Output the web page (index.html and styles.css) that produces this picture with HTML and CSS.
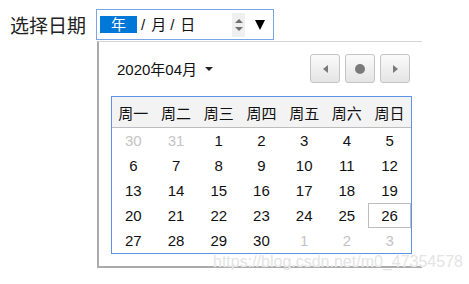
FILE: index.html
```html
<!DOCTYPE html>
<html lang="zh-CN">
<head>
    <meta charset="UTF-8">
    <title>选择日期</title>
    <link rel="stylesheet" href="styles.css">
</head>
<body>
<div class="top-row">
    <label class="label">选择日期</label>
    <div class="date-input">
        <span class="seg seg-active">年</span>
        <span class="sep">/</span>
        <span class="seg">月</span>
        <span class="sep">/</span>
        <span class="seg">日</span>
        <span class="spinner">
            <span class="spin-up"></span>
            <span class="spin-down"></span>
        </span>
        <span class="drop-arrow"></span>
    </div>
</div>

<div class="popup">
    <div class="cal-head">
        <div class="month">2020年04月<span class="caret"></span></div>
        <div class="nav">
            <button class="nav-btn"><span class="tri-left"></span></button>
            <button class="nav-btn"><span class="dot"></span></button>
            <button class="nav-btn"><span class="tri-right"></span></button>
        </div>
    </div>
    <table class="cal">
        <thead>
            <tr><th>周一</th><th>周二</th><th>周三</th><th>周四</th><th>周五</th><th>周六</th><th>周日</th></tr>
        </thead>
        <tbody>
            <tr><td class="other">30</td><td class="other">31</td><td>1</td><td>2</td><td>3</td><td>4</td><td>5</td></tr>
            <tr><td>6</td><td>7</td><td>8</td><td>9</td><td>10</td><td>11</td><td>12</td></tr>
            <tr><td>13</td><td>14</td><td>15</td><td>16</td><td>17</td><td>18</td><td>19</td></tr>
            <tr><td>20</td><td>21</td><td>22</td><td>23</td><td>24</td><td>25</td><td class="today">26</td></tr>
            <tr><td>27</td><td>28</td><td>29</td><td>30</td><td class="other">1</td><td class="other">2</td><td class="other">3</td></tr>
        </tbody>
    </table>
</div>

<div class="watermark">https://blog.csdn.net/m0_47354578</div>
</body>
</html>
```

FILE: styles.css
```css
body {
    margin: 0;
    background-color: #fff;
    color: #111;
    font-family: "Liberation Sans", "Noto Sans CJK SC", sans-serif;
    position: relative;
    height: 284px;
    overflow: hidden;
}

.top-row {
    display: flex;
    align-items: center;
    padding: 9px 0 0 10px;
}

.label {
    font-size: 19px;
    color: #222;
    width: 86px;
}

.date-input {
    display: flex;
    align-items: center;
    box-sizing: border-box;
    width: 178px;
    height: 31px;
    border: 1px solid #7aa6e6;
    padding-left: 3px;
    font-size: 15px;
}

.seg {
    line-height: 17px;
}

.seg-active {
    width: 37px;
    height: 17px;
    text-align: center;
    background-color: #0078d7;
    color: #fff;
}

.sep {
    margin: 0 6px 0 4px;
}

.spinner {
    display: flex;
    flex-direction: column;
    justify-content: space-between;
    align-items: center;
    width: 13px;
    height: 24px;
    box-sizing: border-box;
    padding: 6px 0;
    margin-left: auto;
    background-color: #efefef;
}

.spin-up {
    width: 0;
    height: 0;
    border-left: 4px solid transparent;
    border-right: 4px solid transparent;
    border-bottom: 4px solid #707070;
}

.spin-down {
    width: 0;
    height: 0;
    border-left: 4px solid transparent;
    border-right: 4px solid transparent;
    border-top: 4px solid #707070;
}

.drop-arrow {
    width: 0;
    height: 0;
    margin: 1px 8px 0 10px;
    border-left: 5px solid transparent;
    border-right: 5px solid transparent;
    border-top: 10px solid #000;
}

.popup {
    width: 325px;
    margin: 1px 0 0 97px;
    padding: 12px 12px 12px 12px;
    box-sizing: border-box;
    border-top: 1px solid #d4d4d4;
    border-left: 2px solid #ababab;
    border-bottom: 2px solid #ababab;
}

.cal-head {
    display: flex;
    justify-content: space-between;
    align-items: center;
    margin-bottom: 13px;
}

.month {
    display: flex;
    align-items: center;
    padding-left: 6px;
    font-size: 15px;
    color: #111;
}

.caret {
    width: 0;
    height: 0;
    margin-left: 8px;
    border-left: 4px solid transparent;
    border-right: 4px solid transparent;
    border-top: 4px solid #222;
}

.nav {
    display: flex;
    gap: 5px;
}

.nav-btn {
    display: flex;
    align-items: center;
    justify-content: center;
    width: 30px;
    height: 29px;
    padding: 0;
    border: 1px solid #c4c4c4;
    border-radius: 3px;
    background: linear-gradient(#fbfbfb, #e4e4e4);
}

.tri-left {
    width: 0;
    height: 0;
    border-top: 4px solid transparent;
    border-bottom: 4px solid transparent;
    border-right: 5px solid #7a7a7a;
}

.tri-right {
    width: 0;
    height: 0;
    border-top: 4px solid transparent;
    border-bottom: 4px solid transparent;
    border-left: 5px solid #7a7a7a;
}

.dot {
    width: 10px;
    height: 10px;
    border-radius: 50%;
    background-color: #7a7a7a;
}

.cal {
    width: 301px;
    border: 1px solid #5b93e6;
    border-spacing: 0;
    font-size: 15px;
    table-layout: fixed;
}

.cal th {
    height: 30px;
    padding: 0;
    font-weight: normal;
    background-color: #f3f3f3;
    border-bottom: 1px solid #bdbdbd;
}

.cal td {
    height: 25px;
    padding: 0;
    text-align: center;
}

.cal td.other {
    color: #c4c4c4;
}

.cal td.today {
    box-shadow: inset 0 0 0 1px #bdbdbd;
}

.watermark {
    position: absolute;
    left: 213px;
    top: 253px;
    font-size: 16px;
    color: #e4e4e4;
    text-shadow: 0 0 1px #fff;
}
```
